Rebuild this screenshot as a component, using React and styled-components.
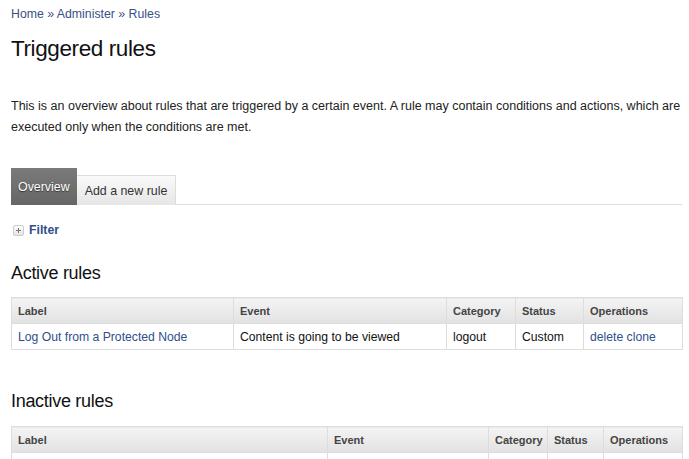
import React from "react";
import styled, { createGlobalStyle } from "styled-components";

const Global = createGlobalStyle`
  html, body { margin: 0; padding: 0; background: #fff; }
  body { font-family: "Liberation Sans", Arial, sans-serif; color: #222; font-size: 12px; }
  a { text-decoration: none; }
`;

const Page = styled.div`
  padding: 0 7px 0 11px;
  width: 671px;
`;

const Breadcrumb = styled.div`
  padding-top: 6px;
  font-size: 12.3px;
  line-height: 16px;
  color: #3b4f86;
  a { color: #3b4f86; }
`;

const Title = styled.h1`
  margin: 13px 0 0;
  font-size: 22.5px;
  font-weight: normal;
  line-height: 28px;
  color: #111;
  letter-spacing: -0.4px;
`;

const Intro = styled.p`
  margin: 33px 0 0;
  font-size: 12.5px;
  line-height: 21px;
  color: #222;
`;

const Tabs = styled.ul`
  list-style: none;
  margin: 30px 0 0;
  padding: 0;
  display: flex;
  align-items: flex-end;
  border-bottom: 1px solid #ddd;
`;

const Tab = styled.li`
  box-sizing: border-box;
  height: ${p => (p.$active ? "37px" : "30px")};
  padding: ${p => (p.$active ? "0 7px" : "1px 8px 0")};
  display: flex;
  align-items: center;
  font-size: 12.4px;
  margin-bottom: -1px;
  color: ${p => (p.$active ? "#fff" : "#333")};
  text-shadow: ${p => (p.$active ? "0 1px 1px #333" : "none")};
  background: ${p =>
    p.$active
      ? "linear-gradient(#7a7a7a, #666)"
      : "linear-gradient(#fafafa, #e6e6e6)"};
  border-top: ${p => (p.$active ? "none" : "1px solid #ddd")};
  border-right: ${p => (p.$active ? "none" : "1px solid #ddd")};
`;

const FilterRow = styled.div`
  margin-top: 18px;
  display: flex;
  align-items: center;
  gap: 5px;
  padding-left: 2px;
`;

const PlusBox = styled.span`
  box-sizing: border-box;
  width: 11px;
  height: 11px;
  border: 1px solid #ccc;
  border-radius: 2px;
  background: linear-gradient(#fff, #e4e4e4);
  display: flex;
  align-items: center;
  justify-content: center;
`;

const FilterLink = styled.a`
  font-weight: bold;
  font-size: 12.3px;
  color: #2f4f8a;
`;

const SectionTitle = styled.h2`
  margin: ${p => p.$top} 0 0;
  font-size: 18px;
  font-weight: normal;
  line-height: 22px;
  color: #111;
  letter-spacing: -0.3px;
`;

const Table = styled.table`
  margin-top: ${p => p.$top};
  width: 100%;
  border-collapse: collapse;
  table-layout: fixed;
  border: 1px solid #ddd;
`;

const Th = styled.th`
  text-align: left;
  font-size: 11px;
  font-weight: bold;
  color: #444;
  height: 25px;
  padding: 0 6px;
  background: linear-gradient(#f4f4f4, #e2e2e2);
  border: 1px solid #ddd;
  border-top: none;
`;

const Td = styled.td`
  font-size: 12.2px;
  height: 25px;
  padding: 0 6px;
  border: 1px solid #ddd;
  color: #111;
  a { color: #2f4f8a; }
`;

const activeCols = [222, 213, 69, 68, 99];
const inactiveCols = [316, 161, 59, 56, 79];

function RulesTable({ cols, top, rows }) {
  return (
    <Table $top={top}>
      <colgroup>
        {cols.map((w, i) => (
          <col key={i} style={{ width: w }} />
        ))}
      </colgroup>
      <thead>
        <tr>
          <Th>Label</Th>
          <Th>Event</Th>
          <Th>Category</Th>
          <Th>Status</Th>
          <Th>Operations</Th>
        </tr>
      </thead>
      <tbody>{rows}</tbody>
    </Table>
  );
}

export default function App() {
  return (
    <>
      <Global />
      <Page>
        <Breadcrumb>
          <a href="#">Home</a> » <a href="#">Administer</a> » <a href="#">Rules</a>
        </Breadcrumb>
        <Title>Triggered rules</Title>
        <Intro>
          This is an overview about rules that are triggered by a certain event. A rule may contain conditions and actions, which are executed only when the conditions are met.
        </Intro>
        <Tabs>
          <Tab $active>Overview</Tab>
          <Tab>Add a new rule</Tab>
        </Tabs>
        <FilterRow>
          <PlusBox>
            <svg width="5" height="5" viewBox="0 0 5 5">
              <path d="M2.5 0v5M0 2.5h5" stroke="#777" strokeWidth="1" />
            </svg>
          </PlusBox>
          <FilterLink href="#">Filter</FilterLink>
        </FilterRow>
        <SectionTitle $top="25px">Active rules</SectionTitle>
        <RulesTable
          cols={activeCols}
          top="13px"
          rows={
            <tr>
              <Td><a href="#">Log Out from a Protected Node</a></Td>
              <Td>Content is going to be viewed</Td>
              <Td>logout</Td>
              <Td>Custom</Td>
              <Td><a href="#">delete</a> <a href="#">clone</a></Td>
            </tr>
          }
        />
        <SectionTitle $top="40px">Inactive rules</SectionTitle>
        <RulesTable
          cols={inactiveCols}
          top="14px"
          rows={
            <tr>
              <Td>&nbsp;</Td>
              <Td />
              <Td />
              <Td />
              <Td />
            </tr>
          }
        />
      </Page>
    </>
  );
}
